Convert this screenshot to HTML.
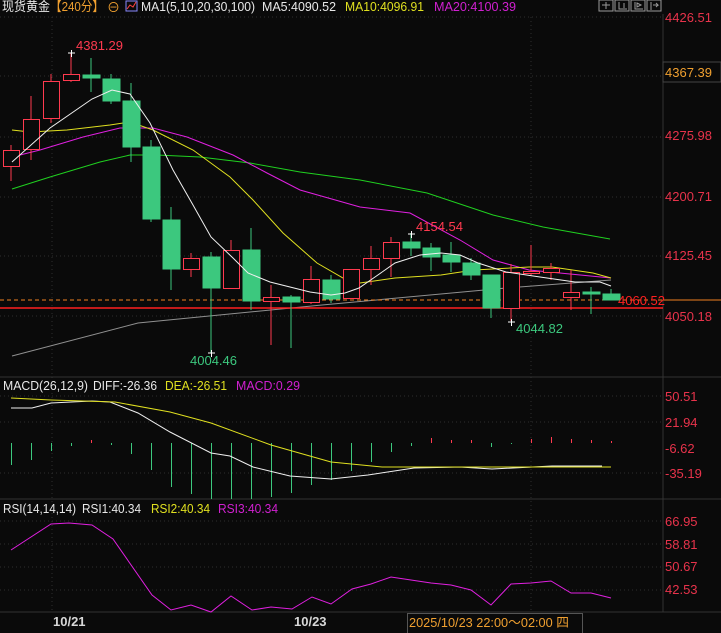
<!DOCTYPE html><html><head><meta charset="utf-8"><style>
body{margin:0;background:#0a0a0a;width:721px;height:633px;overflow:hidden}
svg{display:block}
text{font-family:"Liberation Sans","Noto Sans CJK SC",sans-serif;font-size:13px}
</style></head><body>
<svg width="721" height="633" viewBox="0 0 721 633" xmlns="http://www.w3.org/2000/svg">
<rect width="721" height="633" fill="#0a0a0a"/>
<g stroke="#2e2e2e" stroke-dasharray="1,3" fill="none">
<line x1="0" y1="17" x2="663" y2="17"/><line x1="0" y1="76" x2="663" y2="76"/><line x1="0" y1="137" x2="663" y2="137"/><line x1="0" y1="197" x2="663" y2="197"/><line x1="0" y1="256" x2="663" y2="256"/><line x1="0" y1="316" x2="663" y2="316"/>
<line x1="52" y1="17" x2="52" y2="612"/><line x1="531" y1="17" x2="531" y2="612"/>
<line x1="0" y1="396" x2="663" y2="396"/><line x1="0" y1="422" x2="663" y2="422"/><line x1="0" y1="473" x2="663" y2="473"/>
<line x1="0" y1="521" x2="663" y2="521"/><line x1="0" y1="544" x2="663" y2="544"/><line x1="0" y1="567" x2="663" y2="567"/><line x1="0" y1="590" x2="663" y2="590"/>
</g>
<g stroke="#333"><line x1="663" y1="14" x2="663" y2="612"/><line x1="0" y1="377" x2="721" y2="377"/><line x1="0" y1="499" x2="721" y2="499"/><line x1="0" y1="612" x2="721" y2="612"/></g>
<!-- header -->
<text x="2" y="11" fill="#e8e8e8" textLength="48" lengthAdjust="spacingAndGlyphs">现货黄金</text>
<text x="50" y="11" fill="#f0a030" textLength="54" lengthAdjust="spacingAndGlyphs">【240分】</text>
<text x="107" y="12" fill="#f0a030" font-size="12">⊖</text>
<rect x="126" y="1" width="11" height="10" fill="none" stroke="#8888ff"/><polyline points="127,9 130,5 133,7 136,2" stroke="#ff4444" fill="none"/>
<text x="141" y="11" fill="#e8e8e8" textLength="114" lengthAdjust="spacingAndGlyphs">MA1(5,10,20,30,100)</text>
<text x="262" y="11" fill="#e8e8e8" textLength="74" lengthAdjust="spacingAndGlyphs">MA5:4090.52</text>
<text x="345" y="11" fill="#e0e020" textLength="79" lengthAdjust="spacingAndGlyphs">MA10:4096.91</text>
<text x="434" y="11" fill="#d020d0" textLength="82" lengthAdjust="spacingAndGlyphs">MA20:4100.39</text>
<g stroke="#999" fill="none"><rect x="599" y="0" width="14" height="11"/><rect x="615" y="0" width="14" height="11"/><rect x="631" y="0" width="14" height="11"/><rect x="647" y="0" width="14" height="11"/>
<path d="M602 5h8M606 2v7M619 2v7h8M624 3v5M635 2v7h8M637 3l4 2-4 2zM651 2v8M653 5h5l-2-2M656 7l2-2"/></g>
<g fill="#e8334b"><text x="665" y="22">4426.51</text><text x="665" y="140">4275.98</text><text x="665" y="201">4200.71</text><text x="665" y="260">4125.45</text><text x="665" y="321">4050.18</text>
<text x="665" y="401">50.51</text><text x="665" y="427">21.94</text><text x="665" y="453">-6.62</text><text x="665" y="478">-35.19</text>
<text x="665" y="526">66.95</text><text x="665" y="549">58.81</text><text x="665" y="571">50.67</text><text x="665" y="594">42.53</text></g>
<rect x="663" y="62" width="58" height="20" fill="#0a0a0a" stroke="#444"/><text x="665" y="77" fill="#f0a030">4367.39</text>
<g fill="none" stroke-width="1">
<polyline stroke="#909090" points="12,356 138,323 322,305 506,288 611,280"/>
<polyline stroke="#20d020" points="12,189 50,177 100,162 130,155 157,155 200,157 250,163 300,172 360,180 427,193 493,215 543,227 610,239"/>
<polyline stroke="#e020e0" points="12,157 40,150 83,137 120,128 153,128 187,137 233,155 267,173 300,190 360,207 410,213 460,240 493,260 529,270 611,278"/>
<polyline stroke="#e0e020" points="12,130 30,132 67,130 110,125 130,122 153,130 193,150 230,177 253,200 283,233 317,263 343,278 360,283 395,278 441,275 474,270 529,267 552,267 593,273 611,278"/>
</g>
<line x1="0" y1="300" x2="663" y2="300" stroke="#f08020" stroke-dasharray="4,3"/>
<line x1="663" y1="300" x2="721" y2="300" stroke="#f08020"/>
<line x1="0" y1="308" x2="663" y2="308" stroke="#ff2020" stroke-width="1.5"/>
<g stroke="#ff3a4f" fill="#0a0a0a">
<line x1="11" y1="145" x2="11" y2="181"/><rect x="3.5" y="150.5" width="16" height="16"/>
<line x1="31" y1="96" x2="31" y2="160"/><rect x="23.5" y="119.5" width="16" height="30"/>
<line x1="51" y1="74" x2="51" y2="123"/><rect x="43.5" y="81.5" width="16" height="37"/>
<line x1="71" y1="53" x2="71" y2="82"/><rect x="63.5" y="74.5" width="16" height="6"/>
<line x1="191" y1="253" x2="191" y2="277"/><rect x="183.5" y="258.5" width="16" height="11"/>
<line x1="231" y1="240" x2="231" y2="288"/><rect x="223.5" y="250.5" width="16" height="38"/>
<line x1="271" y1="285" x2="271" y2="345"/><rect x="263.5" y="297.5" width="16" height="4"/>
<line x1="311" y1="266" x2="311" y2="304"/><rect x="303.5" y="279.5" width="16" height="23"/>
<line x1="351" y1="269" x2="351" y2="299"/><rect x="343.5" y="269.5" width="16" height="29"/>
<line x1="371" y1="246" x2="371" y2="285"/><rect x="363.5" y="258.5" width="16" height="11"/>
<line x1="391" y1="237" x2="391" y2="277"/><rect x="383.5" y="242.5" width="16" height="16"/>
<line x1="511" y1="264" x2="511" y2="321"/><rect x="503.5" y="272.5" width="16" height="36"/>
<line x1="531" y1="245" x2="531" y2="276"/><rect x="523.5" y="271.5" width="16" height="2"/>
<line x1="551" y1="263" x2="551" y2="280"/><rect x="543.5" y="268.5" width="16" height="4"/>
<line x1="571" y1="270" x2="571" y2="310"/><rect x="563.5" y="292.5" width="16" height="5"/>
</g>
<g stroke="#3cc87e" fill="#3cc87e">
<line x1="91" y1="58" x2="91" y2="92"/><rect x="83" y="75" width="17" height="3"/>
<line x1="111" y1="74" x2="111" y2="104"/><rect x="103" y="79" width="17" height="22"/>
<line x1="131" y1="83" x2="131" y2="162"/><rect x="123" y="101" width="17" height="46"/>
<line x1="151" y1="140" x2="151" y2="222"/><rect x="143" y="147" width="17" height="72"/>
<line x1="171" y1="207" x2="171" y2="290"/><rect x="163" y="220" width="17" height="49"/>
<line x1="211" y1="252" x2="211" y2="353"/><rect x="203" y="257" width="17" height="31"/>
<line x1="251" y1="228" x2="251" y2="310"/><rect x="243" y="250" width="17" height="51"/>
<line x1="291" y1="295" x2="291" y2="348"/><rect x="283" y="297" width="17" height="5"/>
<line x1="331" y1="275" x2="331" y2="303"/><rect x="323" y="280" width="17" height="19"/>
<line x1="411" y1="233" x2="411" y2="256"/><rect x="403" y="242" width="17" height="6"/>
<line x1="431" y1="243" x2="431" y2="271"/><rect x="423" y="248" width="17" height="9"/>
<line x1="451" y1="242" x2="451" y2="272"/><rect x="443" y="255" width="17" height="7"/>
<line x1="471" y1="258" x2="471" y2="280"/><rect x="463" y="263" width="17" height="12"/>
<line x1="491" y1="275" x2="491" y2="318"/><rect x="483" y="275" width="17" height="33"/>
<line x1="591" y1="287" x2="591" y2="314"/><rect x="583" y="292" width="17" height="2"/>
<line x1="611" y1="289" x2="611" y2="300"/><rect x="603" y="294" width="17" height="6"/>
</g>
<polyline fill="none" stroke="#f0f0f0" points="12,162 50,128 92,99 112,90 130,94 150,123 173,170 193,205 211,237 233,258 248,273 270,282 290,287 310,292 331,295 345,293 359,288 375,277 395,263 420,255 441,253 460,255 478,263 506,272 540,277 575,282 600,282 611,286"/>
<g stroke="#fff"><path d="M68 53h7M71.5 50v7M208 353h7M211.5 350v7M408 234h7M411.5 231v7M508 322h7M511.5 319v7"/></g>
<text x="76" y="50" fill="#ff3a4f">4381.29</text>
<text x="416" y="231" fill="#ff3a4f">4154.54</text>
<text x="190" y="365" fill="#3cc87e">4004.46</text>
<text x="516" y="333" fill="#3cc87e">4044.82</text>
<text x="618" y="305" fill="#ff2020">4060.52</text>
<!-- MACD -->
<text x="3" y="390" fill="#e8e8e8" textLength="85" lengthAdjust="spacingAndGlyphs">MACD(26,12,9)</text><text x="93" y="390" fill="#e8e8e8" textLength="64" lengthAdjust="spacingAndGlyphs">DIFF:-26.36</text><text x="165" y="390" fill="#e0e020" textLength="62" lengthAdjust="spacingAndGlyphs">DEA:-26.51</text><text x="236" y="390" fill="#d020d0" textLength="64" lengthAdjust="spacingAndGlyphs">MACD:0.29</text>
<g stroke="#3cc87e">
<line x1="11.5" y1="443" x2="11.5" y2="465"/><line x1="31.5" y1="443" x2="31.5" y2="460"/><line x1="51.5" y1="443" x2="51.5" y2="451"/><line x1="71.5" y1="443" x2="71.5" y2="446"/><line x1="111.5" y1="443" x2="111.5" y2="445"/><line x1="131.5" y1="443" x2="131.5" y2="454"/><line x1="151.5" y1="443" x2="151.5" y2="470"/><line x1="171.5" y1="443" x2="171.5" y2="487"/><line x1="191.5" y1="443" x2="191.5" y2="494"/><line x1="211.5" y1="443" x2="211.5" y2="499"/><line x1="231.5" y1="443" x2="231.5" y2="499"/><line x1="251.5" y1="443" x2="251.5" y2="499"/><line x1="271.5" y1="443" x2="271.5" y2="497"/><line x1="291.5" y1="443" x2="291.5" y2="493"/><line x1="311.5" y1="443" x2="311.5" y2="485"/><line x1="331.5" y1="443" x2="331.5" y2="480"/><line x1="351.5" y1="443" x2="351.5" y2="471"/><line x1="371.5" y1="443" x2="371.5" y2="462"/><line x1="391.5" y1="443" x2="391.5" y2="452"/><line x1="411.5" y1="443" x2="411.5" y2="446"/><line x1="491.5" y1="443" x2="491.5" y2="447"/><line x1="511.5" y1="443" x2="511.5" y2="444"/>
</g>
<g stroke="#ff3a4f"><line x1="91.5" y1="440" x2="91.5" y2="443"/><line x1="431.5" y1="438" x2="431.5" y2="443"/><line x1="451.5" y1="440" x2="451.5" y2="443"/><line x1="471.5" y1="440" x2="471.5" y2="443"/><line x1="531.5" y1="439" x2="531.5" y2="443"/><line x1="551.5" y1="437" x2="551.5" y2="443"/><line x1="571.5" y1="439" x2="571.5" y2="443"/><line x1="591.5" y1="440" x2="591.5" y2="443"/><line x1="611.5" y1="441" x2="611.5" y2="443"/></g>
<polyline fill="none" stroke="#f0f0f0" points="11,408 32,408 51,403 92,401 110,402 138,413 170,432 211,453 230,456 253,467 290,476 331,479 368,475 414,468 460,467 492,469 552,466 602,466"/>
<polyline fill="none" stroke="#e0e020" points="11,398 51,400 115,402 170,412 211,423 271,445 331,462 382,467 441,467 552,467 611,467"/>
<!-- RSI -->
<text x="3" y="513" fill="#e8e8e8" textLength="73" lengthAdjust="spacingAndGlyphs">RSI(14,14,14)</text><text x="82" y="513" fill="#e8e8e8" textLength="59" lengthAdjust="spacingAndGlyphs">RSI1:40.34</text><text x="151" y="513" fill="#e0e020" textLength="59" lengthAdjust="spacingAndGlyphs">RSI2:40.34</text><text x="218" y="513" fill="#d020d0" textLength="60" lengthAdjust="spacingAndGlyphs">RSI3:40.34</text>
<polyline fill="none" stroke="#e020e0" points="11,550 51,524 69,523 92,525 113,539 152,595 171,610 191,605 211,612 231,596 252,610 271,607 292,609 312,597 331,604 352,589 371,584 391,577 411,580 431,583 451,585 471,590 491,605 511,584 531,583 551,581 571,593 591,593 611,598"/>
<text x="53" y="626" fill="#d8d8d8" font-weight="bold" font-size="12">10/21</text>
<text x="294" y="626" fill="#d8d8d8" font-weight="bold" font-size="12">10/23</text>
<rect x="407.5" y="613.5" width="175" height="20" fill="#0a0a0a" stroke="#555"/>
<text x="409" y="627" fill="#f0a030" font-size="13" textLength="160" lengthAdjust="spacingAndGlyphs">2025/10/23 22:00～02:00 四</text>
</svg>
</body></html>
